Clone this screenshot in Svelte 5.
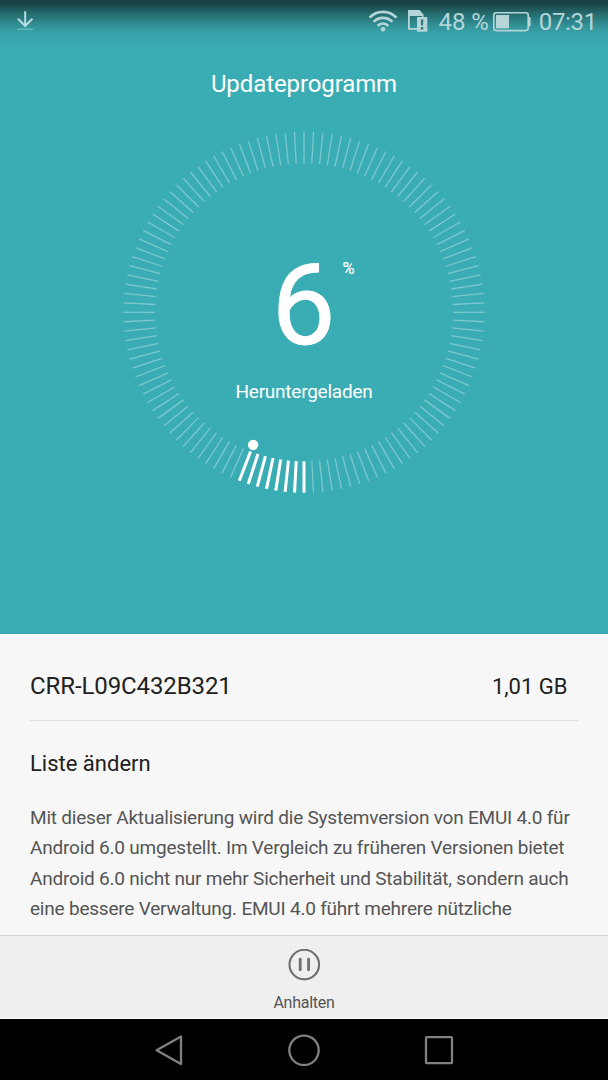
<script>
  const TICKS = 120;
  const SIZE = 364;
  const C = SIZE / 2;

  let percent = $state(6);
  let version = 'CRR-L09C432B321';
  let size = '1,01 GB';

  let changes = [
    'Mit dieser Aktualisierung wird die Systemversion von EMUI 4.0 für',
    'Android 6.0 umgestellt. Im Vergleich zu früheren Versionen bietet',
    'Android 6.0 nicht nur mehr Sicherheit und Stabilität, sondern auch',
    'eine bessere Verwaltung. EMUI 4.0 führt mehrere nützliche'
  ];

  let done = $derived(Math.floor((percent / 100) * TICKS) + 1);

  // Ticks run clockwise, starting at the bottom of the dial
  function point(index, radius) {
    const a = (index * 2 * Math.PI) / TICKS;
    return { x: C - Math.sin(a) * radius, y: C + 0.3 + Math.cos(a) * radius };
  }

  let ticks = $derived(
    Array.from({ length: TICKS }, (_, i) => ({
      from: point(i, 149),
      to: point(i, 180.5),
      active: i < done
    }))
  );

  let knob = $derived(point(done - 1, 142));
</script>

<div class="screen">
  <section class="hero">
    <header class="status-bar">
      <svg class="download" width="18" height="20" viewBox="0 0 18 20" fill="none">
        <path d="M8.2 0.3V15M1 7.8L8.2 15L15.4 7.8" stroke="#b9dcdf" stroke-width="2" />
        <path d="M0.3 18.3H16" stroke="#63b9bf" stroke-width="1.5" />
      </svg>
      <div class="status-right">
        <svg class="wifi" width="30" height="22" viewBox="0 0 30 22" fill="none" stroke="#b5d6d8" stroke-width="2.7">
          <path d="M1.6 7.6C9 0 21 0 28.4 7.6" />
          <path d="M5.6 11.9C10.8 6.5 19.2 6.5 24.4 11.9" />
          <path d="M9.6 15.9C12.6 12.7 17.4 12.7 20.4 15.9" />
          <circle cx="15" cy="19.3" r="2.3" fill="#b5d6d8" stroke="none" />
        </svg>
        <svg class="sim" width="20" height="22" viewBox="0 0 20 22">
          <path d="M0 0H11.5L15.5 4.5V7H14V6H1.8V18H9V19.8H0Z" fill="#b5d6d8" />
          <path d="M9 7H19.3V21.7H9Z" fill="#b5d6d8" />
          <path d="M12.8 9.5H15.4L15 15.5H13.2ZM12.9 17H15.3V19.4H12.9Z" fill="#2c7b80" />
        </svg>
        <span class="battery-level">48 %</span>
        <svg class="battery" width="38" height="20" viewBox="0 0 38 20">
          <rect x="0.8" y="0.8" width="34.4" height="17.8" rx="2.5" fill="none" stroke="#b5d6d8" stroke-width="1.6" />
          <rect x="3" y="3" width="13" height="13.4" fill="#b5d6d8" />
          <path d="M35 5H36.5Q37.6 5 37.6 6V13.5Q37.6 14.5 36.5 14.5H35Z" fill="#b5d6d8" />
        </svg>
        <span class="clock">07:31</span>
      </div>
    </header>

    <h1>Updateprogramm</h1>

    <div class="dial">
      <svg width={SIZE} height={SIZE} viewBox="0 0 {SIZE} {SIZE}">
        {#each ticks as tick}
          <line
            class:active={tick.active}
            x1={tick.from.x}
            y1={tick.from.y}
            x2={tick.to.x}
            y2={tick.to.y}
          />
        {/each}
        <circle class="knob" cx={knob.x} cy={knob.y} r="5.2" />
      </svg>
      <div class="readout">
        <div class="number">{percent}<span class="unit">%</span></div>
        <div class="state">Heruntergeladen</div>
      </div>
    </div>
  </section>

  <main class="details">
    <div class="version-row">
      <span class="version">{version}</span>
      <span class="size">{size}</span>
    </div>
    <h2>Liste ändern</h2>
    <p>
      {#each changes as line}
        <span>{line}</span>
      {/each}
    </p>
  </main>

  <button class="pause">
    <svg width="32" height="32" viewBox="0 0 32 32" fill="none" stroke="#707070">
      <circle cx="16.3" cy="15.6" r="14.8" stroke-width="2.1" />
      <path d="M12.2 10.2V20.8M20.6 10.2V20.8" stroke-width="2.9" stroke-linecap="round" />
    </svg>
    <span>Anhalten</span>
  </button>

  <nav>
    <svg width="32" height="32" viewBox="0 0 32 32">
      <path d="M3.6 16.3L28 2.5V30.1Z" />
    </svg>
    <svg width="32" height="32" viewBox="0 0 32 32">
      <circle cx="16" cy="16.3" r="14.7" />
    </svg>
    <svg width="32" height="32" viewBox="0 0 32 32">
      <rect x="3" y="3.2" width="26" height="26" rx="0.8" />
    </svg>
  </nav>
</div>

<style>
  :global(body) {
    margin: 0;
    background: #000;
  }

  .screen {
    display: flex;
    flex-direction: column;
    width: 608px;
    height: 1080px;
    overflow: hidden;
    font-family: Roboto, 'Liberation Sans', sans-serif;
  }

  svg {
    display: block;
    flex-shrink: 0;
  }

  .hero {
    display: flex;
    flex-direction: column;
    align-items: center;
    box-sizing: border-box;
    height: 634px;
    flex-shrink: 0;
    color: #fff;
    background: linear-gradient(#193f41 0, #1b4547 4px, #267073 15px, #33959b 27px, #38a5ac 35px, #3aacb4 48px);
    border-bottom: 1px solid #35a5ad;
  }

  .status-bar {
    display: flex;
    justify-content: space-between;
    box-sizing: border-box;
    width: 100%;
    height: 44px;
    padding: 10px 11px 0 17px;
    color: #b5d6d8;
    font-size: 24px;
    line-height: 24px;
  }

  .download {
    margin-top: 1px;
  }

  .status-right {
    display: flex;
    align-items: flex-start;
  }

  .sim {
    margin: 0 11px 0 10px;
  }

  .battery {
    margin: 2px 8px 0 4px;
  }

  .battery-level {
    letter-spacing: -0.1px;
  }

  .clock {
    letter-spacing: -0.3px;
  }

  h1 {
    margin: 24px 0 0;
    font-size: 24px;
    font-weight: 400;
    letter-spacing: -0.1px;
    line-height: 32px;
  }

  .dial {
    display: grid;
    justify-items: center;
    margin-top: 30px;
  }

  .dial > * {
    grid-area: 1 / 1;
  }

  line {
    stroke: #fff;
    stroke-opacity: 0.34;
    stroke-width: 1.3;
  }

  line.active {
    stroke-opacity: 1;
    stroke-width: 3;
  }

  .knob {
    fill: #fff;
  }

  .readout {
    text-align: center;
  }

  .number {
    position: relative;
    margin: 115px 1px 0 0;
    font-size: 114px;
    line-height: 120px;
    -webkit-text-stroke: 0.8px #fff;
  }

  .unit {
    position: absolute;
    top: 14px;
    left: 107px;
    font-size: 16.5px;
    line-height: 20px;
    -webkit-text-stroke: 0.2px #fff;
  }

  .state {
    margin-top: 15px;
    font-size: 19px;
    letter-spacing: -0.24px;
    line-height: 24px;
  }

  .details {
    flex: 1;
    padding: 0 30px;
    background: #f7f7f7;
    overflow: hidden;
  }

  .version-row {
    display: flex;
    justify-content: space-between;
    align-items: center;
    box-sizing: border-box;
    height: 87px;
    padding: 18px 10.5px 0 0;
    color: #212121;
    border-bottom: 1px solid #dedede;
  }

  .version {
    font-size: 24px;
    letter-spacing: -0.1px;
  }

  .size {
    font-size: 22px;
  }

  h2 {
    margin: 27px 0 0;
    color: #212121;
    font-size: 22px;
    font-weight: 400;
    line-height: 32px;
  }

  p {
    margin: 23px 0 0;
    color: #555;
    font-size: 19px;
    letter-spacing: -0.21px;
    line-height: 30.4px;
  }

  p span {
    display: block;
    white-space: nowrap;
  }

  .pause {
    display: flex;
    flex-direction: column;
    align-items: center;
    box-sizing: border-box;
    height: 84px;
    flex-shrink: 0;
    padding: 13px 0 0;
    border: none;
    border-top: 1px solid #d5d5d5;
    border-bottom: 1px solid #fff;
    background: #efefef;
    color: #555;
    font: inherit;
    font-size: 16px;
    letter-spacing: -0.25px;
    line-height: 20px;
  }

  .pause span {
    margin-top: 12px;
  }

  nav {
    display: flex;
    justify-content: center;
    align-items: center;
    gap: 103px;
    height: 61px;
    flex-shrink: 0;
    background: #000;
  }

  nav svg {
    fill: none;
    stroke: #808080;
    stroke-width: 2.3;
    stroke-linejoin: round;
  }
</style>
